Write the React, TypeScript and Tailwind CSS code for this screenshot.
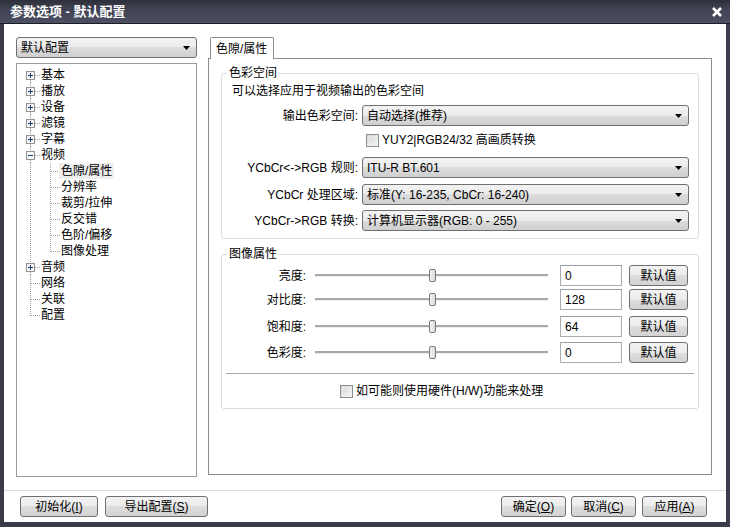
import React from 'react';

type Cell = 'first' | 'plus' | 'minus' | 'tee' | 'ell' | 'pipe';

const Gutter: React.FC<{ type: Cell }> = ({ type }) => {
    const box = type === 'first' || type === 'plus' || type === 'minus';
    const dot = { stroke: '#a0a0a0', strokeDasharray: '1 1' };
    return (
        <svg width="20" height="16" className="shrink-0" shapeRendering="crispEdges">
            {(type === 'pipe' || type === 'tee') && <line x1="10.5" y1="0" x2="10.5" y2="16" {...dot} />}
            {type === 'ell' && <line x1="10.5" y1="0" x2="10.5" y2="9" {...dot} />}
            {(type === 'tee' || type === 'ell') && <line x1="11" y1="8.5" x2="20" y2="8.5" {...dot} />}
            {box && (
                <>
                    {type !== 'first' && <line x1="10.5" y1="0" x2="10.5" y2="4" {...dot} />}
                    <line x1="10.5" y1="13" x2="10.5" y2="16" {...dot} />
                    <line x1="15" y1="8.5" x2="20" y2="8.5" {...dot} />
                    <rect x="6.5" y="4.5" width="8" height="8" fill="#f7f7f7" stroke="#919191" />
                    <line x1="8" y1="8.5" x2="13" y2="8.5" stroke="#1c3a86" />
                    {type !== 'minus' && <line x1="10.5" y1="6" x2="10.5" y2="11" stroke="#1c3a86" />}
                </>
            )}
        </svg>
    );
};

const tree: { label: string; cells: Cell[]; selected?: boolean }[] = [
    { label: '基本', cells: ['first'] },
    { label: '播放', cells: ['plus'] },
    { label: '设备', cells: ['plus'] },
    { label: '滤镜', cells: ['plus'] },
    { label: '字幕', cells: ['plus'] },
    { label: '视频', cells: ['minus'] },
    { label: '色隙/属性', cells: ['pipe', 'tee'], selected: true },
    { label: '分辨率', cells: ['pipe', 'tee'] },
    { label: '裁剪/拉伸', cells: ['pipe', 'tee'] },
    { label: '反交错', cells: ['pipe', 'tee'] },
    { label: '色阶/偏移', cells: ['pipe', 'tee'] },
    { label: '图像处理', cells: ['pipe', 'ell'] },
    { label: '音频', cells: ['plus'] },
    { label: '网络', cells: ['tee'] },
    { label: '关联', cells: ['tee'] },
    { label: '配置', cells: ['ell'] },
];

const Arrow = () => (
    <svg width="7" height="4" className="shrink-0">
        <polygon points="0,0 7,0 3.5,4" fill="#000" />
    </svg>
);

const Combo: React.FC<{ text: string; className?: string }> = ({ text, className = '' }) => (
    <div className={`flex h-[21px] items-center rounded-[3px] border border-[#707070] bg-[linear-gradient(#f3f3f3,#ebebeb_50%,#dddddd_50%,#cfcfcf)] pl-[4px] pr-[6px] ${className}`}>
        <span className="flex-1 truncate">{text}</span>
        <Arrow />
    </div>
);

const Button: React.FC<{ className?: string; children: React.ReactNode }> = ({ className = '', children }) => (
    <div className={`flex h-[21px] items-center justify-center rounded-[3px] border border-[#707070] bg-[linear-gradient(#f3f3f3,#ebebeb_50%,#dddddd_50%,#d3d3d3)] ${className}`}>
        {children}
    </div>
);

const Check = () => (
    <div className="h-[13px] w-[13px] shrink-0 border border-[#8e8f8f] bg-[linear-gradient(135deg,#d6d6d6,#f6f6f6)] p-px">
        <div className="h-full w-full border border-[#f0f0f0]/60" />
    </div>
);

const Slider = () => (
    <div className="ml-[9px] flex w-[233px] items-center">
        <div className="h-[3px] w-[114px] border-b border-[#eeeeee] bg-[#a8a8a8]" />
        <div className="h-[13px] w-[7px] shrink-0 rounded-[2px] border border-[#7a7a7a] bg-[linear-gradient(90deg,#f4f4f4,#d9d9d9)]" />
        <div className="h-[3px] flex-1 border-b border-[#eeeeee] bg-[#a8a8a8]" />
    </div>
);

const App: React.FC = () => {
    const rows1 = [
        { label: 'YCbCr<->RGB 规则:', value: 'ITU-R BT.601', mt: 'mt-[7px]' },
        { label: 'YCbCr 处理区域:', value: '标准(Y: 16-235, CbCr: 16-240)', mt: 'mt-[6px]' },
        { label: 'YCbCr->RGB 转换:', value: '计算机显示器(RGB: 0 - 255)', mt: 'mt-[5px]' },
    ];
    const rows2 = [
        { label: '亮度:', value: '0', mt: 'mt-[3px]' },
        { label: '对比度:', value: '128', mt: 'mt-[3px]' },
        { label: '饱和度:', value: '64', mt: 'mt-[6px]' },
        { label: '色彩度:', value: '0', mt: 'mt-[5px]' },
    ];

    return (
        <div className="flex h-[527px] w-[730px] flex-col bg-[#3a3d49] font-['Liberation_Sans','Noto_Sans_CJK_SC',sans-serif] text-[12px] text-black">
            {/* title bar */}
            <div className="flex h-[24px] shrink-0 items-center justify-between border-b border-[#1c1e25] bg-[linear-gradient(#2d303a,#3e4151_35%,#4c5063)] pl-[10px] pr-[8px]">
                <span className="text-[13px] font-bold text-white">参数选项 - 默认配置</span>
                <svg width="10" height="10" viewBox="0 0 10 10">
                    <path d="M1 1L9 9M9 1L1 9" stroke="#fff" strokeWidth="2.6" />
                </svg>
            </div>

            <div className="mx-[4px] mb-[5px] flex flex-1 flex-col bg-white">
                <div className="flex flex-1 pb-[13px] pl-[12px] pr-[14px] pt-[13px]">
                    {/* left column */}
                    <div className="flex w-[181px] flex-col">
                        <Combo text="默认配置" />
                        <div className="mt-[5px] flex-1 border border-[#9a9a9a] pl-[3px] pt-[3px]">
                            {tree.map((item) => (
                                <div key={item.label} className="flex h-[16px] items-center">
                                    {item.cells.map((c, i) => (
                                        <Gutter key={i} type={c} />
                                    ))}
                                    <span className={`-ml-px px-[2px] leading-[16px] ${item.selected ? 'bg-[#eeeeee]' : ''}`}>{item.label}</span>
                                </div>
                            ))}
                        </div>
                    </div>

                    {/* right column */}
                    <div className="mb-[2px] ml-[11px] flex flex-1 flex-col">
                        <div className="flex h-[21px]">
                            <div className="relative z-10 ml-[2px] flex h-[22px] w-[64px] items-center rounded-t-[2px] border border-b-0 border-[#898c95] bg-white pl-[5px]">
                                色隙/属性
                            </div>
                        </div>
                        <div className="flex-1 border border-[#898c95] pl-[12px] pr-[12px] pt-[6px]">
                            <fieldset className="rounded-[3px] border border-[#d5dfe5] pb-[7px]">
                                <legend className="ml-[5px] px-[2px] leading-[16px]">色彩空间</legend>
                                <div className="flex h-[20px] items-center pl-[10px]">可以选择应用于视频输出的色彩空间</div>
                                <div className="mt-[4px] flex items-center pr-[9px]">
                                    <span className="w-[136px] text-right">输出色彩空间:</span>
                                    <Combo text="自动选择(推荐)" className="ml-[4px] flex-1" />
                                </div>
                                <div className="mt-[4px] flex h-[20px] items-center gap-[3px] pl-[144px]">
                                    <Check />
                                    <span>YUY2|RGB24/32 高画质转换</span>
                                </div>
                                {rows1.map((r) => (
                                    <div key={r.label} className={`${r.mt} flex items-center pr-[9px]`}>
                                        <span className="w-[136px] text-right">{r.label}</span>
                                        <Combo text={r.value} className="ml-[4px] flex-1" />
                                    </div>
                                ))}
                            </fieldset>

                            <fieldset className="mt-[7px] rounded-[3px] border border-[#d5dfe5] pb-[7px]">
                                <legend className="ml-[5px] px-[2px] leading-[16px]">图像属性</legend>
                                {rows2.map((r) => (
                                    <div key={r.label} className={`${r.mt} flex h-[21px] items-center`}>
                                        <span className="w-[84px] text-right">{r.label}</span>
                                        <Slider />
                                        <div className="ml-[12px] flex h-[21px] w-[62px] items-center border border-[#abadb3] border-t-[#9a9da5] bg-white px-[4px]">{r.value}</div>
                                        <Button className="ml-[7px] w-[59px]">默认值</Button>
                                    </div>
                                ))}
                                <div className="mx-[4px] mt-[10px] h-px bg-[#a6a6a6]" />
                                <div className="mt-[7px] flex h-[20px] items-center gap-[3px] pl-[118px]">
                                    <Check />
                                    <span>如可能则使用硬件(H/W)功能来处理</span>
                                </div>
                            </fieldset>
                        </div>
                    </div>
                </div>

                {/* bottom buttons */}
                <div className="flex h-[32px] shrink-0 items-start border-t border-[#dcdcdc] pl-[16px] pr-[19px] pt-[5px]">
                    <Button className="w-[78px]">初始化(<u>I</u>)</Button>
                    <Button className="ml-[7px] w-[103px]">导出配置(<u>S</u>)</Button>
                    <div className="flex-1" />
                    <Button className="w-[65px]">确定(<u>O</u>)</Button>
                    <Button className="ml-[5px] w-[65px]">取消(<u>C</u>)</Button>
                    <Button className="ml-[6px] w-[65px]">应用(<u>A</u>)</Button>
                </div>
            </div>
        </div>
    );
};

export default App;
